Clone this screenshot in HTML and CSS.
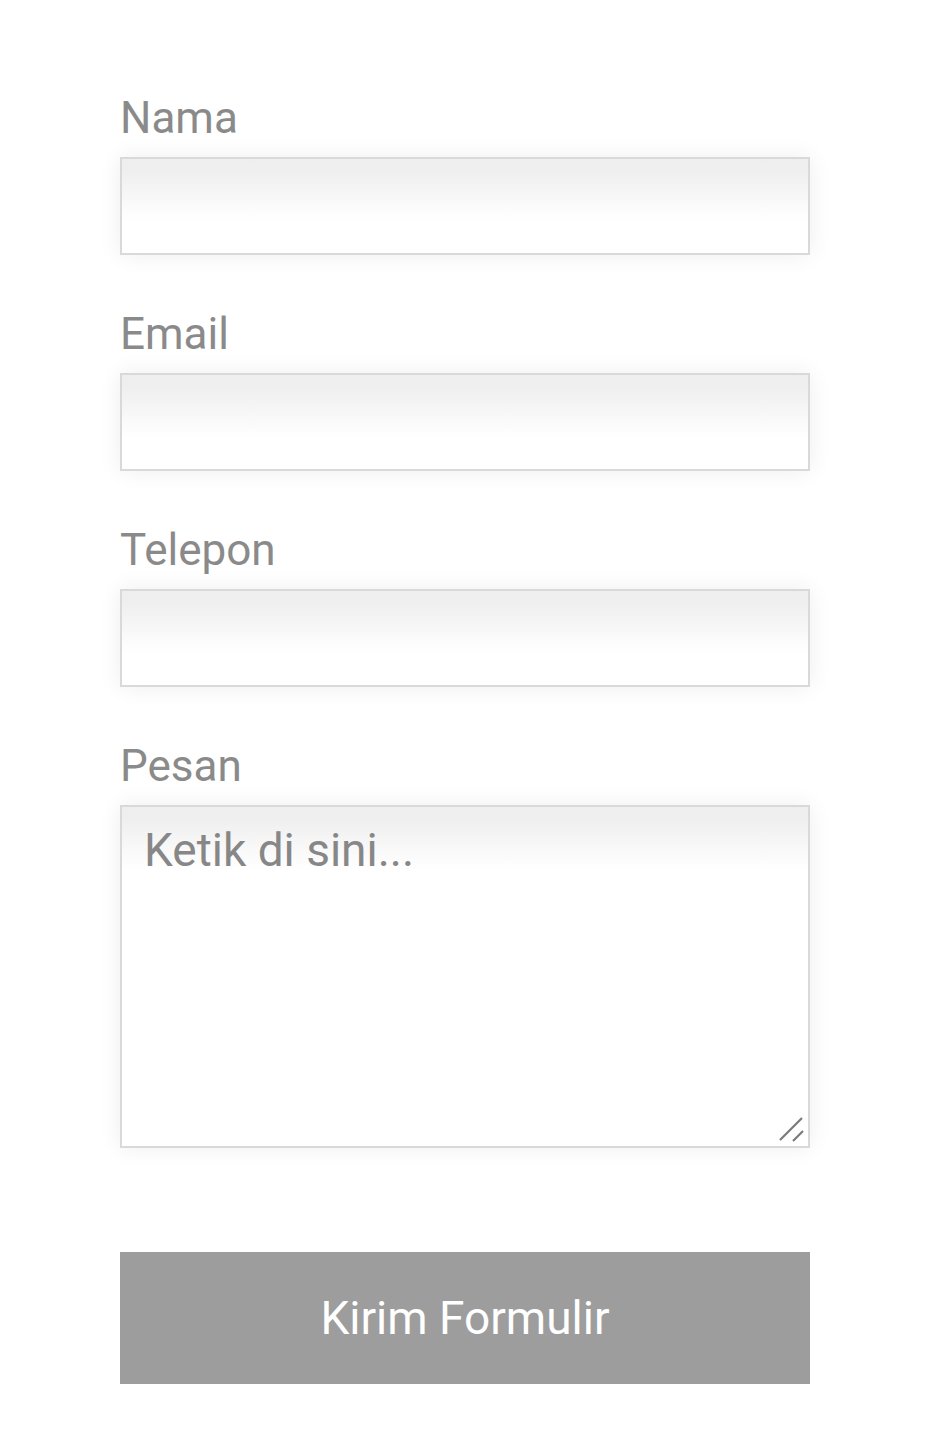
FILE: index.html
```html
<!DOCTYPE html>
<html>
<head>
    <title>Formulir Kontak</title>
    <link rel="stylesheet" href="styles.css">
</head>
<body>
    <form class="contact-form">
        <div class="field">
            <label for="nama">Nama</label>
            <input type="text" id="nama" name="nama">
        </div>
        <div class="field">
            <label for="email">Email</label>
            <input type="email" id="email" name="email">
        </div>
        <div class="field">
            <label for="telepon">Telepon</label>
            <input type="tel" id="telepon" name="telepon">
        </div>
        <div class="field message">
            <label for="pesan">Pesan</label>
            <textarea id="pesan" name="pesan" placeholder="Ketik di sini..."></textarea>
            <svg class="grip" width="28" height="28" viewBox="0 0 28 28">
                <path d="M3 25 L25 3 M16 26 L26 16" stroke="#7a7a7a" stroke-width="2.2" fill="none"/>
            </svg>
        </div>
        <button type="submit" class="submit">Kirim Formulir</button>
    </form>
</body>
</html>
```

FILE: styles.css
```css
body {
    margin: 0;
    background: #fff;
    font-family: Roboto, "Liberation Sans", sans-serif;
}
.contact-form {
    width: 690px;
    margin: 0 auto;
    padding: 92px 0 66px;
    display: flex;
    flex-direction: column;
}
.field {
    display: flex;
    flex-direction: column;
    margin-bottom: 53px;
}
.field label {
    font-size: 44px;
    line-height: 52px;
    color: #8a8a8a;
    margin-bottom: 13px;
}
.field input,
.field textarea {
    box-sizing: border-box;
    width: 100%;
    height: 98px;
    border: 2px solid #d9d9d9;
    border-radius: 0;
    background: linear-gradient(to bottom, #eeeeee 0, #efefef 12px, #fff 62px) no-repeat;
    box-shadow: 0 0 22px rgba(0, 0, 0, 0.07);
    font-family: inherit;
    font-size: 46px;
    color: #777;
    padding: 10px 22px;
    outline: none;
}
.message {
    position: relative;
}
.field textarea {
    height: 343px;
    resize: none;
    line-height: 52px;
    padding-top: 17px;
}
.field textarea::placeholder {
    color: #878787;
}
.grip {
    position: absolute;
    right: 5px;
    bottom: 5px;
    pointer-events: none;
}
.submit {
    margin-top: 51px;
    height: 132px;
    border: none;
    background-color: #9d9d9d;
    color: #fff;
    font-family: inherit;
    font-size: 46px;
    cursor: pointer;
}
```
